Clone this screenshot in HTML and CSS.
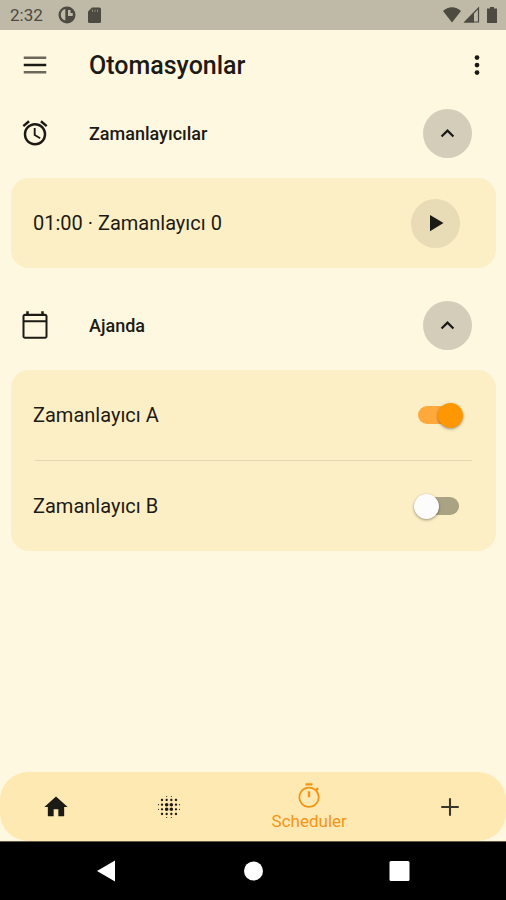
FILE: index.html
```html
<!DOCTYPE html>
<html lang="tr">
<head>
<meta charset="utf-8">
<meta name="viewport" content="width=device-width, initial-scale=1">
<title>Otomasyonlar</title>
<link rel="stylesheet" href="styles.css">
</head>
<body>
<div class="status-bar">
  <span class="clock">2:32</span>
  <svg class="status-icon" viewBox="0 0 18 18"><circle cx="9" cy="9" r="8.500" fill="#4c4a41"/><path d="M7.300 3v11.500C4.500 14 2.800 11.500 2.800 8.800S4.500 3.600 7.300 3z" fill="#bfb9a7"/><path d="M10 4h2.500v3h2.200v3H10z" fill="#bfb9a7"/></svg>
  <svg class="status-icon" viewBox="0 0 18 18"><path d="M7 1.500h7.500a1.500 1.500 0 0 1 1.500 1.500v12.500a1.500 1.500 0 0 1-1.500 1.500h-10A1.500 1.500 0 0 1 3 15.500V5.500z" fill="#4c4a41"/><path d="M7.500 3.500v2.500M10 3.500v2.500M12.500 3.500v2.500" stroke="#88846f"/></svg>
  <span class="spacer"></span>
  <svg class="status-icon" viewBox="0 0 18 18"><path d="M9 16.500L0 5C5-.1 13-.1 18 5z" fill="#4c4a41"/></svg>
  <svg class="status-icon" viewBox="0 0 18 18"><path d="M15.500 2v14H2z" fill="none" stroke="#4c4a41" stroke-width="1.200"/><path d="M1 16.500L11 6.500v10z" fill="#4c4a41"/></svg>
  <svg class="status-icon" viewBox="0 0 18 18"><path d="M7 1h4v1.500h3v14.500H4V2.500h3z" fill="#4c4a41"/></svg>
</div>

<header class="app-bar">
  <button class="icon-button" aria-label="Menü"><svg class="icon" viewBox="0 0 24 24"><path d="M3 5.200h18v2H3zM3 16.800h18v2H3z" fill="#6b685b"/><path d="M3 11h18v2H3z"/></svg></button>
  <h1>Otomasyonlar</h1>
  <button class="icon-button" aria-label="Diğer"><svg class="icon" viewBox="0 0 24 24"><circle cx="12" cy="6" r="1.900"/><circle cx="12" cy="12" r="1.900"/><circle cx="12" cy="18" r="1.900"/></svg></button>
</header>

<main>
  <section>
    <div class="section-head">
      <svg class="icon" viewBox="0 0 24 24"><path d="M22 5.720l-4.600-3.860-1.290 1.530 4.600 3.860L22 5.720zM7.880 3.390L6.600 1.860 2 5.710l1.290 1.530 4.590-3.850zM12.500 8H11v6l4.750 2.850.75-1.230-4-2.370V8zM12 4c-4.970 0-9 4.030-9 9s4.020 9 9 9a9 9 0 0 0 0-18zm0 16c-3.870 0-7-3.130-7-7s3.130-7 7-7 7 3.130 7 7-3.130 7-7 7z"/></svg>
      <h2>Zamanlayıcılar</h2>
      <button class="round-button" aria-label="Zamanlayıcıları daralt"><svg class="chevron" viewBox="0 0 24 24"><path d="M12 8l-6 6 1.410 1.410L12 10.830l4.590 4.580L18 14z"/></svg></button>
    </div>
    <div class="card">
      <div class="row">
        <span class="label">01:00 · Zamanlayıcı 0</span>
        <button class="round-button play" aria-label="Başlat"><svg class="icon" viewBox="0 0 24 24"><path d="M7.200 5.500v13L18 12z"/></svg></button>
      </div>
    </div>
  </section>

  <section>
    <div class="section-head">
      <svg class="icon" viewBox="0 0 24 24"><path d="M20 3h-1V1h-2v2H7V1H5v2H4c-1.100 0-2 .9-2 2v16c0 1.100.9 2 2 2h16c1.100 0 2-.9 2-2V5c0-1.100-.9-2-2-2zm.4 18.400H3.600V9.700h16.800v11.700zm0-13.200H3.600V4.700h16.800v3.500z"/></svg>
      <h2>Ajanda</h2>
      <button class="round-button" aria-label="Ajandayı daralt"><svg class="chevron" viewBox="0 0 24 24"><path d="M12 8l-6 6 1.410 1.410L12 10.830l4.590 4.580L18 14z"/></svg></button>
    </div>
    <div class="card">
      <div class="row">
        <label class="label" for="timer-a">Zamanlayıcı A</label>
        <input class="switch" type="checkbox" id="timer-a" checked>
      </div>
      <hr>
      <div class="row">
        <label class="label" for="timer-b">Zamanlayıcı B</label>
        <input class="switch" type="checkbox" id="timer-b">
      </div>
    </div>
  </section>
</main>

<nav class="tabs">
  <a class="tab" href="#home" aria-label="Ana sayfa"><svg class="tab-icon" viewBox="0 0 24 24"><path d="M10 20v-6h4v6h5v-8h3L12 3 2 12h3v8z"/></svg></a>
  <a class="tab" href="#effects" aria-label="Efektler"><svg class="tab-icon" viewBox="0 0 24 24"><path d="M6 13c-.55 0-1 .45-1 1s.45 1 1 1 1-.45 1-1-.45-1-1-1zm0 4c-.55 0-1 .45-1 1s.45 1 1 1 1-.45 1-1-.45-1-1-1zm0-8c-.55 0-1 .45-1 1s.45 1 1 1 1-.45 1-1-.45-1-1-1zm-3 .5c-.28 0-.5.22-.5.500s.22.500.5.500.5-.22.500-.5-.22-.5-.5-.5zM6 5c-.55 0-1 .45-1 1s.45 1 1 1 1-.45 1-1-.45-1-1-1zm15 5.500c.28 0 .5-.22.500-.5s-.22-.5-.5-.5-.5.220-.5.500.22.500.5.500zM14 7c.55 0 1-.45 1-1s-.45-1-1-1-1 .45-1 1 .45 1 1 1zm0-3.500c.28 0 .5-.22.500-.5s-.22-.5-.5-.5-.5.220-.5.500.22.500.5.500zm-11 10c-.28 0-.5.220-.5.500s.22.500.5.500.5-.22.500-.5-.22-.5-.5-.5zm7 7c-.28 0-.5.220-.5.500s.22.500.5.500.5-.22.500-.5-.22-.5-.5-.5zm0-17c.28 0 .5-.22.500-.5s-.22-.5-.5-.5-.5.220-.5.500.22.500.5.500zM10 7c.55 0 1-.45 1-1s-.45-1-1-1-1 .45-1 1 .45 1 1 1zm0 5.500c-.83 0-1.500.67-1.500 1.500s.67 1.500 1.500 1.500 1.500-.67 1.500-1.500-.67-1.500-1.500-1.500zm8 .5c-.55 0-1 .45-1 1s.45 1 1 1 1-.45 1-1-.45-1-1-1zm0 4c-.55 0-1 .45-1 1s.45 1 1 1 1-.45 1-1-.45-1-1-1zm0-8c-.55 0-1 .45-1 1s.45 1 1 1 1-.45 1-1-.45-1-1-1zm0-4c-.55 0-1 .45-1 1s.45 1 1 1 1-.45 1-1-.45-1-1-1zm3 8.500c-.28 0-.5.220-.5.500s.22.500.5.500.5-.22.500-.5-.22-.5-.5-.5zM14 17c-.55 0-1 .45-1 1s.45 1 1 1 1-.45 1-1-.45-1-1-1zm0 3.500c-.28 0-.5.220-.5.500s.22.500.5.500.5-.22.500-.5-.22-.5-.5-.5zm-4-12c-.83 0-1.500.67-1.500 1.500s.67 1.500 1.500 1.500 1.500-.67 1.500-1.500-.67-1.500-1.500-1.500zm0 8.500c-.55 0-1 .45-1 1s.45 1 1 1 1-.45 1-1-.45-1-1-1zm4-4.500c-.83 0-1.500.67-1.500 1.500s.67 1.500 1.500 1.500 1.500-.67 1.500-1.500-.67-1.500-1.500-1.500zm0-4c-.83 0-1.500.67-1.500 1.500s.67 1.500 1.500 1.500 1.500-.67 1.500-1.500-.67-1.500-1.500-1.500z"/></svg></a>
  <a class="tab active" href="#scheduler" aria-current="page"><svg class="tab-icon" viewBox="0 0 24 24"><path d="M15 1H9v2h6V1zm-4 12h2V8h-2v5zm8.030-5.610l1.420-1.420c-.43-.51-.9-.99-1.410-1.410l-1.420 1.420A8.962 8.962 0 0 0 12 4c-4.970 0-9 4.030-9 9s4.020 9 9 9a8.994 8.994 0 0 0 7.030-14.610zM12 20.500c-4.100 0-7.500-3.400-7.500-7.500s3.400-7.500 7.500-7.500 7.500 3.400 7.500 7.500-3.400 7.500-7.500 7.500z"/></svg><span>Scheduler</span></a>
  <a class="tab" href="#add" aria-label="Ekle"><svg class="tab-icon" viewBox="0 0 24 24"><path d="M19.500 12.900h-6.600v6.600h-1.800v-6.600H4.500v-1.800h6.600V4.500h1.800v6.600h6.600z" fill="#38352b"/></svg></a>
</nav>

<div class="system-bar">
  <button aria-label="Geri"><svg viewBox="0 0 24 24"><path d="M20 1.500v21L2 12z"/></svg></button>
  <button aria-label="Ana ekran"><svg viewBox="0 0 24 24"><circle cx="12.500" cy="12" r="9.500"/></svg></button>
  <button aria-label="Son uygulamalar"><svg viewBox="0 0 24 24"><rect x="2.500" y="2" width="20" height="20" rx="1.500"/></svg></button>
</div>
</body>
</html>
```
FILE: styles.css
```css
* {
  box-sizing: border-box;
}

body {
  margin: 0;
  min-height: 100vh;
  display: flex;
  flex-direction: column;
  background: #fff8e1;
  color: #1c1a14;
  font-family: Roboto, "Noto Sans", sans-serif;
}

button {
  display: grid;
  place-items: center;
  flex: none;
  padding: 0;
  border: 0;
  background: none;
  color: inherit;
}

svg {
  display: block;
  flex: none;
  fill: currentColor;
}

h1,
h2 {
  flex: 1;
  margin: 0;
  font-weight: 500;
}

h1 {
  font-size: 25px;
}

h2 {
  font-size: 18px;
}

.status-bar {
  display: flex;
  align-items: center;
  gap: 2px;
  height: 30px;
  padding: 0 5px 0 10px;
  background: #bfb9a7;
  color: #4c4a41;
}

.clock {
  margin-right: 13px;
  font-size: 17px;
}

.status-icon {
  width: 18px;
  height: 18px;
  margin-right: 7px;
}

.status-icon:nth-last-child(-n+3) {
  margin-right: 0;
}

.spacer {
  flex: 1;
}

.icon,
.icon-button {
  width: 30px;
  height: 30px;
}

.app-bar,
.section-head {
  display: flex;
  align-items: center;
  gap: 39px;
  padding-left: 20px;
}

.app-bar {
  height: 70px;
  padding-right: 14px;
}

main {
  display: flex;
  flex: 1;
  flex-direction: column;
  gap: 24px;
}

.section-head {
  height: 66px;
  margin-bottom: 12px;
  padding-right: 34px;
}

.round-button {
  width: 49px;
  height: 49px;
  border-radius: 50%;
  background: #d3cdba;
}

.play {
  background: #e8dcb6;
}

.chevron {
  width: 27px;
  height: 27px;
}

.card {
  margin: 0 10px 0 11px;
  border-radius: 18px;
  background: #fdefc5;
}

.row {
  display: flex;
  align-items: center;
  justify-content: space-between;
  height: 90px;
  padding: 0 36px 0 22px;
}

.label {
  font-size: 20px;
}

hr {
  height: 1px;
  margin: 0 24px;
  border: 0;
  background: #e3d7b1;
}

.switch {
  display: flex;
  align-items: center;
  width: 49px;
  height: 26px;
  margin: 0 -3px;
  padding: 0 4px;
  appearance: none;
}

.switch::before {
  content: "";
  flex: none;
  width: 41px;
  height: 18px;
  border-radius: 9px;
  background: #aaa383;
}

.switch::after {
  content: "";
  flex: none;
  width: 25px;
  height: 25px;
  margin-left: -45px;
  border-radius: 50%;
  background: #fcfcfc;
  box-shadow: 0 1px 3px #0006;
}

.switch:checked::before {
  background: #ffa83c;
}

.switch:checked::after {
  margin-left: -21px;
  background: #ff9800;
}

.tabs {
  display: flex;
  height: 69px;
  border-radius: 28px;
  background: #ffe9b3;
}

.tab {
  display: flex;
  flex: 2;
  flex-direction: column;
  align-items: center;
  justify-content: center;
  color: inherit;
  font-size: 17px;
  line-height: 22px;
  text-decoration: none;
}

.tab.active {
  flex: 3;
  color: #f39514;
}

.tab-icon {
  width: 28px;
  height: 28px;
}

.system-bar {
  display: flex;
  align-items: center;
  justify-content: center;
  gap: 122px;
  height: 59px;
  border-top: 1px solid #625b47;
  background: #000;
  color: #fff;
}

.system-bar svg {
  width: 24px;
  height: 24px;
}
```
